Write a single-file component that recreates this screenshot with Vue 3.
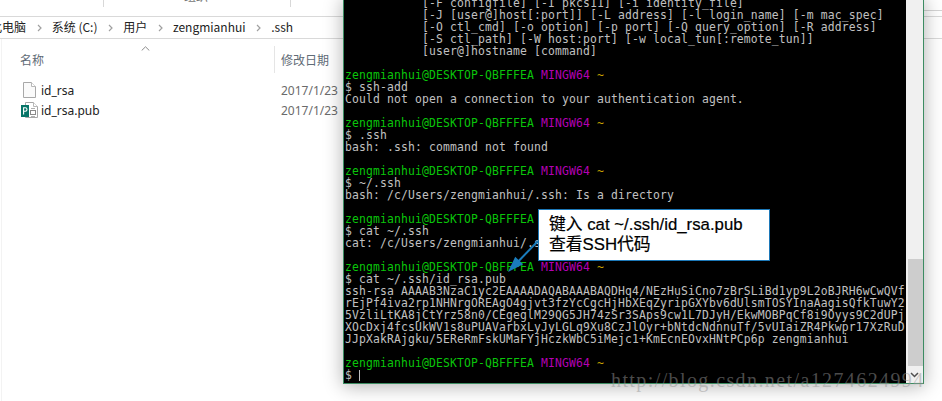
<script setup>
const prompt = [
  { c: 'g', t: 'zengmianhui@DESKTOP-QBFFFEA ' },
  { c: 'm', t: 'MINGW64 ' },
  { c: 'y', t: '~' }
]
const plain = (t) => [{ c: 'w', t }]
const lines = [
  plain('           [-F configfile] [-I pkcs11] [-i identity_file]'),
  plain('           [-J [user@]host[:port]] [-L address] [-l login_name] [-m mac_spec]'),
  plain('           [-O ctl_cmd] [-o option] [-p port] [-Q query_option] [-R address]'),
  plain('           [-S ctl_path] [-W host:port] [-w local_tun[:remote_tun]]'),
  plain('           [user@]hostname [command]'),
  plain(' '),
  prompt,
  plain('$ ssh-add'),
  plain('Could not open a connection to your authentication agent.'),
  plain(' '),
  prompt,
  plain('$ .ssh'),
  plain('bash: .ssh: command not found'),
  plain(' '),
  prompt,
  plain('$ ~/.ssh'),
  plain('bash: /c/Users/zengmianhui/.ssh: Is a directory'),
  plain(' '),
  prompt,
  plain('$ cat ~/.ssh'),
  plain('cat: /c/Users/zengmianhui/.ssh: Is a directory'),
  plain(' '),
  prompt,
  plain('$ cat ~/.ssh/id_rsa.pub'),
  plain('ssh-rsa AAAAB3NzaC1yc2EAAAADAQABAAABAQDHq4/NEzHuSiCno7zBrSLiBd1yp9L2oBJRH6wCwQVf'),
  plain('rEjPf4iva2rp1NHNrgOREAgO4gjvt3fzYcCgcHjHbXEqZyripGXYbv6dUlsmTOSYInaAagisQfkTuwY2'),
  plain('5VzliLtKA8jCtYrz58n0/CEgeglM29QG5JH74zSr3SAps9cw1L7DJyH/EkwMOBPqCf8i9Oyys9C2dUPj'),
  plain('XOcDxj4fcsUkWV1s8uPUAVarbxLyJyLGLq9Xu8CzJlOyr+bNtdcNdnnuTf/5vUIaiZR4Pkwpr17XzRuD'),
  plain('JJpXakRAjgku/5EReRmFskUMaFYjHczkWbC5iMejc1+KmEcnEOvxHNtPCp6p zengmianhui'),
  plain(' '),
  prompt,
  plain('$ ')
]
const crumbs = ['此电脑', '系统 (C:)', '用户', 'zengmianhui', '.ssh']
const files = [
  { name: 'id_rsa', date: '2017/1/23', kind: 'doc' },
  { name: 'id_rsa.pub', date: '2017/1/23', kind: 'pub' }
]
</script>

<template>
  <div class="desktop">
    <section class="explorer">
      <div class="ribbon">
        <span class="group g1"></span>
        <span class="group g2"><span class="group-label">组织</span></span>
        <span class="ribbon-end"></span>
      </div>
      <nav class="address">
        <template v-for="(c, i) in crumbs" :key="c">
          <span class="crumb" :class="{ first: i === 0 }">{{ c }}</span>
          <svg v-if="i < crumbs.length - 1" class="chev" width="5" height="8" viewBox="0 0 5 8"><path d="M1 1l3 3-3 3" fill="none" stroke="#a0a0a0" stroke-width="1.2"/></svg>
        </template>
      </nav>
      <div class="list">
        <div class="head">
          <span class="col-name">名称</span>
          <svg class="sort" width="9" height="5" viewBox="0 0 9 5"><path d="M.7 4.5L4.5.8l3.8 3.7" fill="none" stroke="#8a8a8a"/></svg>
          <span class="col-date">修改日期</span>
        </div>
        <div class="rows">
          <div v-for="f in files" :key="f.name" class="row">
            <span class="icon">
              <svg v-if="f.kind === 'doc'" class="doc" width="13" height="16" viewBox="0 0 13 16"><path d="M.5.5h8l4 4v11H.5z" fill="#fafafa" stroke="#a8a8a8"/><path d="M8.5.5v4h4" fill="#fff" stroke="#b8b8b8"/></svg>
              <svg v-else width="17" height="16" viewBox="0 0 17 16"><path d="M4.5.5h8l4 4v11h-12z" fill="#fff" stroke="#a8a8a8"/><path d="M12.5.500v4h4" fill="#fff" stroke="#b8b8b8"/><rect x="9.500" y="8.500" width="5" height="4" fill="#fff" stroke="#8a8a8a"/><path d="M10 6.500h4M10 14.500h4" stroke="#b0b0b0"/><rect x="0" y="3" width="8" height="12" fill="#077568"/><path d="M2.600 12.500V5.800h1.700a1.600 1.600 0 010 3.400H2.600" fill="none" stroke="#fff" stroke-width="1.100"/></svg>
            </span>
            <span class="fname">{{ f.name }}</span>
            <span class="fdate">{{ f.date }}</span>
          </div>
        </div>
      </div>
    </section>

    <section class="terminal">
      <div class="screen">
        <div v-for="(l, i) in lines" :key="i" class="line"><span v-for="(s, j) in l" :key="j" :class="s.c">{{ s.t }}</span><span v-if="i === lines.length - 1" class="cursor"></span></div>
      </div>
      <div class="scrollbar">
        <div class="thumb"></div>
        <div class="down"><svg width="9" height="6" viewBox="0 0 9 6"><path d="M1 1l3.500 3.500L8 1" fill="none" stroke="#505050" stroke-width="1.500"/></svg></div>
      </div>
    </section>

    <svg class="arrow" width="40" height="42" viewBox="0 0 40 42"><path d="M35 6L15 26.700" stroke="#1a7cbc" stroke-width="2" fill="none"/><path d="M5 37L12.200 21.700l7.900 7.600z" fill="#1a7cbc"/></svg>
    <div class="callout">键入 cat ~/.ssh/id_rsa.pub<br>查看SSH代码</div>
    <div class="watermark">http://blog.csdn.net/a1274624994</div>
  </div>
</template>

<style>
html, body { margin: 0; background: #fff; overflow: hidden; }
</style>

<style scoped>
.desktop {
  position: relative;
  width: 942px;
  height: 401px;
  overflow: hidden;
  background: #fff;
  font-family: "Noto Sans CJK SC", "Open Sans", sans-serif;
}
.explorer { display: flex; flex-direction: column; height: 100%; }
.ribbon {
  display: flex;
  align-items: flex-start;
  height: 16px;
  flex: none;
  overflow: hidden;
}
.group { display: block; height: 7px; border-right: 1px solid #d8d8d8; box-sizing: border-box; position: relative; }
.g1 { width: 104px; }
.g2 { width: 187px; }
.ribbon-end { margin-left: auto; width: 19px; height: 11px; box-sizing: border-box; border-bottom: 1px solid #d4d4d4; }
.group-label { position: absolute; left: 80px; top: -13px; font-size: 12px; color: #777; }
.address {
  display: flex;
  flex: none;
  align-items: center;
  height: 23px;
  border-top: 1px solid #d9d9d9;
  border-bottom: 1px solid #d9d9d9;
  font-size: 12px;
  color: #222;
  box-sizing: border-box;
  padding-bottom: 2px;
  overflow: hidden;
}
.crumb { white-space: nowrap; margin-right: 10.7px; flex: none; }
.chev { margin-right: 10px; flex: none; margin-top: 2px; }
.crumb.first { margin-left: -10px; }
.list { flex: 1; margin-left: 1px; border-left: 1px solid #f3f3f3; padding-top: 7px; }
.head {
  position: relative;
  display: flex;
  height: 27px;
  align-items: center;
  font-size: 12px;
  color: #5f6b76;
}
.col-name { margin-left: 18px; width: 254px; flex: none; }
.col-date { border-left: 1px solid #e5e5e5; height: 27px; line-height: 27px; padding-left: 6px; }
.sort { position: absolute; left: 139px; top: 0; }
.rows { padding-top: 7px; }
.row {
  display: flex;
  align-items: center;
  height: 20px;
  font-size: 12px;
  color: #222;
}
.icon { width: 39px; flex: none; padding-left: 19px; box-sizing: border-box; display: flex; }
.doc { margin-left: 2px; }
.fname { width: 240px; flex: none; font-family: "Noto Sans", sans-serif; }
.fdate { color: #6b6b6b; font-family: "Noto Sans", sans-serif; }

.terminal {
  position: absolute;
  left: 343px;
  top: -3px;
  width: 581px;
  height: 387px;
  box-sizing: border-box;
  border: 1px solid #3c8c62;
  border-top: 0;
  display: flex;
  background: #000;
  box-shadow: 0 2px 18px rgba(0, 0, 0, .32);
}
.screen { flex: 1; min-width: 0; overflow: hidden; padding-left: 1px; font-family: "DejaVu Sans Mono", monospace; font-size: 11.4px; letter-spacing: .14px; line-height: 12px; }
.line { height: 12px; white-space: pre; color: #bfbfbf; position: relative; }
.g { color: #0ac50a; }
.m { color: #b400b4; }
.y { color: #c4a000; }
.w { color: #c0c0c0; }
.cursor { display: inline-block; width: 1px; height: 11px; background: #c0c0c0; vertical-align: -2px; }
.scrollbar { width: 17px; flex: none; background: #f0f0f0; display: flex; flex-direction: column; justify-content: flex-end; align-items: flex-end; }
.thumb { width: 15px; height: 107px; background: #cdcdcd; }
.down { width: 17px; height: 17px; display: flex; align-items: center; justify-content: center; }

.callout {
  position: absolute;
  left: 538px;
  top: 209px;
  width: 232px;
  height: 52px;
  box-sizing: border-box;
  background: #fff;
  border: 1px solid #1c78b8;
  padding: 5px 0 0 10px;
  font-family: "Liberation Sans", "Noto Sans CJK SC", sans-serif;
  font-size: 16.8px;
  line-height: 20px;
  color: #000;
  -webkit-text-stroke: .2px #000;
}
.arrow { position: absolute; left: 503px; top: 235px; }
.watermark {
  position: absolute;
  left: 611px;
  top: 369px;
  font-family: "Liberation Serif", serif;
  font-size: 20px;
  letter-spacing: 1.400px;
  color: rgba(150, 150, 150, .5);
  white-space: nowrap;
}
</style>
